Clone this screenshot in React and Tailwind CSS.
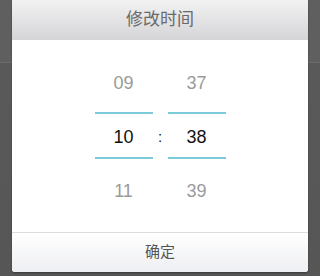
export default function App() {
  const cjk = { fontFamily: '"Liberation Sans", "Noto Sans CJK SC", sans-serif' };
  const num = { fontFamily: '"Liberation Sans", Arial, sans-serif' };
  const Col = ({ a, b, c }) => (
    <div className="flex w-[58px] flex-col items-center" style={num}>
      <div className="h-[20px] text-[18px] leading-[20px] text-[#9a9a9a]">{a}</div>
      <div className="mt-[19px] h-[2px] w-full bg-[#7ccbdb]" />
      <div className="mt-[13px] h-[20px] text-[18px] leading-[20px] text-[#111]">{b}</div>
      <div className="mt-[10px] h-[2px] w-full bg-[#7ccbdb]" />
      <div className="mt-[22px] h-[20px] text-[18px] leading-[20px] text-[#9a9a9a]">{c}</div>
    </div>
  );
  return (
    <div className="h-[276px] w-[320px] overflow-hidden bg-[linear-gradient(to_bottom,#5f5f5f_0,#5f5f5f_62px,#6a6a6a_62px,#6a6a6a_63px,#595959_63px,#565656_100%)] px-[12px]">
      <div className="flex h-[272px] w-[296px] flex-col overflow-hidden rounded-b-[3px] bg-white shadow-[0_1px_2px_rgba(0,0,0,0.35)]">
        <div
          className="flex h-[40px] items-center justify-center bg-[linear-gradient(to_bottom,#f2f2f2,#d5d5d8)] text-[17px] text-[#6a6a6a]"
          style={cjk}
        >
          修改时间
        </div>
        <div className="flex h-[192px] justify-center pt-[33px]">
          <Col a="09" b="10" c="11" />
          <div className="w-[15px] pt-[54px] text-center text-[15px] leading-[20px] text-[#111]" style={num}>
            :
          </div>
          <Col a="37" b="38" c="39" />
        </div>
        <div
          className="flex h-[40px] items-center justify-center border-t border-[#dcdcdc] bg-[linear-gradient(to_bottom,#ffffff,#eeeff2)] text-[15px] text-[#555]"
          style={cjk}
        >
          确定
        </div>
      </div>
    </div>
  );
}
